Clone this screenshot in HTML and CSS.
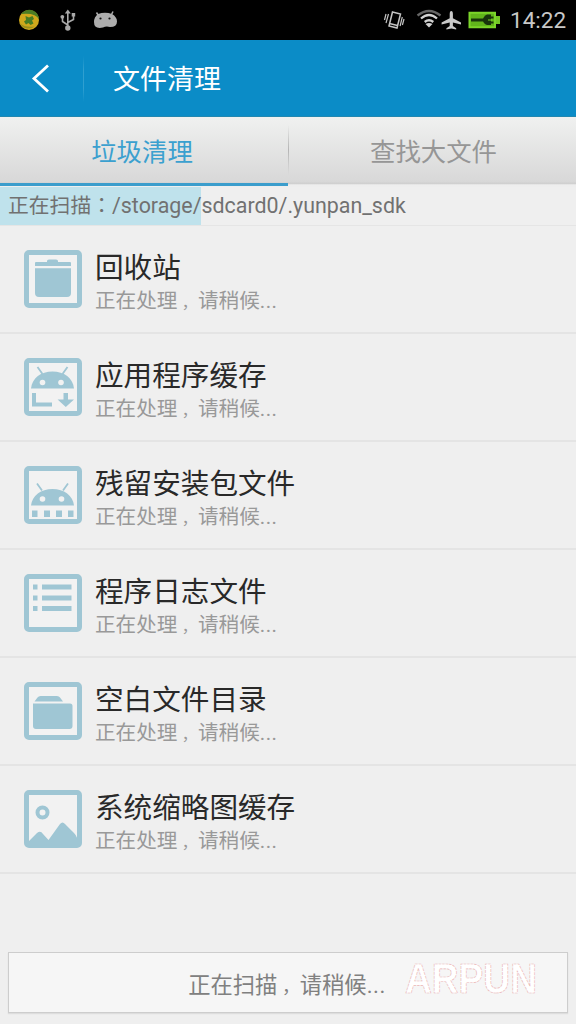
FILE: index.html
```html
<!DOCTYPE html>
<html lang="zh-CN">
<head>
<meta charset="utf-8">
<title>文件清理</title>
<link rel="stylesheet" href="styles.css">
</head>
<body>
<div class="screen">
  <div class="status">
    <svg class="status-icons" width="130" height="40" viewBox="0 0 130 40">
      <circle cx="29" cy="20" r="10" fill="#d0a81c"/>
      <path d="M21 14a10 10 0 0 1 12-3.500 10 10 0 0 1 6 9q-3-7-18-5.500z" fill="#4b7d24"/>
      <path d="M19.500 23q6 5 15 3.500a10 10 0 0 1-15-3.500z" fill="#9a8f1c"/>
      <path d="M25.500 16l3.500 1.500 3.500-1.500 1.500 3-2 1.500 1.500 3-3 1.500-2-2-2.500 1.500-2-3 2-1.500z" fill="#467d24"/>
      <g stroke="#a9a9a9" stroke-width="1.600" fill="none">
        <path d="M67.800 28V12M67.800 25L62.500 21.500V17M67.800 22.500L73.500 19.500V15"/>
      </g>
      <path d="M67.800 9.500l3 4h-6z" fill="#a9a9a9"/><circle cx="67.800" cy="28" r="2.700" fill="#a9a9a9"/><circle cx="62.300" cy="16.800" r="1.900" fill="#a9a9a9"/><path d="M71.700 13h3.500v3.500h-3.500z" fill="#a9a9a9"/>
      <path d="M98 14Q105 11.500 112 14Q117 17 117 21.500Q117 27 110 27Q106 26 103 27.500Q94 29.500 94 22Q94 17 98 14z" fill="#adadad"/>
      <path d="M96.500 12.500l2.500 4M113 11.500l-2 4" stroke="#adadad" stroke-width="1.500"/>
      <circle cx="100.500" cy="18.500" r="1.100" fill="#111"/><circle cx="109.500" cy="18.500" r="1.100" fill="#111"/>
    </svg>
    <svg class="status-icons" width="126" height="40" viewBox="380 0 126 40">
      <g fill="none" stroke="#c4c4c4" stroke-width="1.500">
        <path d="M392.500 12l8 2-3.500 14-8-2zM389.500 23.500l8 2"/>
        <path d="M388.500 14l-2.500 9M386 14l-1.500 6M402.300 17l-2.200 9M404 19l-1.600 6" stroke-width="1.200"/>
      </g>
      <g fill="none" stroke="#d2d2d2" stroke-width="2.300">
        <path d="M417.500 15.500Q429 6.500 440.500 15.500" stroke="#666"/>
        <path d="M421 18.500Q429 11.500 437 18.500"/>
        <path d="M424.700 22Q429 18.500 433.300 22"/>
      </g>
      <path d="M425.500 24q3.500-2 7 0l-3.500 3.500z" fill="#d2d2d2"/>
      <path d="M451.300 11q1.600 0 1.600 3v4.200l8.100 4.300v2l-8.100-2v3.500l3.300 2.200v1.300l-4.900-1-4.900 1v-1.300l3.300-2.200v-3.500l-8.100 2v-2l8.100-4.300V14q0-3 1.600-3z" fill="#c9c9c9"/>
      <path d="M469.500 12.800h25.500v14.400h-25.500z" fill="#61b51b" stroke="#7bd52a" stroke-width="2"/>
      <path d="M496 16h4v8h-4z" fill="#72c625"/>
      <path d="M471 18.500h13v3h-13z" fill="#18350c"/>
      <path d="M491 14.500v10.500h-4q-4-1.500-4-5t4-5.500z" fill="#18350c"/>
      <path d="M489 17.500h4.500M489 22.500h4.500" stroke="#18350c" stroke-width="2"/>
      <path d="M488 20h4" stroke="#7bd52a"/>
    </svg>
    <span class="clock">14:22</span>
  </div>
  <header class="titlebar">
    <svg class="back" width="84" height="77" viewBox="0 0 84 77"><path d="M48 25.500L34 38.500L48 51.500" fill="none" stroke="#fff" stroke-width="2.800"/></svg>
    <h1 class="title">文件清理</h1>
  </header>
  <nav class="tabs">
    <div class="tab tab-active">垃圾清理</div>
    <div class="tab">查找大文件</div>
  </nav>
  <div class="scan">正在扫描<span class="colon" lang="zh-TW">：</span><span class="path">/storage/sdcard0/.yunpan_sdk</span></div>
  <ul class="list">
    <li class="row">
      <svg class="icon" viewBox="0 0 58 58"><rect class="frame" x="2.500" y="2.500" width="53" height="53" rx="2.500"/><path d="M11 16v-3q0-1 1-1h11v-1q0-1.500 2-1.500h7q2 0 2 1.500v1h12q1 0 1 1v3zM11 18.300h36V43q0 4-4 4H15q-4 0-4-4z"/></svg>
      <div class="text"><div class="name">回收站</div><div class="state">正在处理<span class="comma">，</span>请稍候<span class="dots">...</span></div></div>
    </li>
    <li class="row">
      <svg class="icon" viewBox="0 0 58 58"><rect class="frame" x="2.500" y="2.500" width="53" height="53" rx="2.500"/><path d="M7 30.500C8 20 17 13.500 28.500 13.500S49 20 50 30.500z"/><path class="line" d="M13.500 9l5 7M43.500 9l-5 7"/><circle class="hole" cx="18.500" cy="24.500" r="2.800"/><circle class="hole" cx="37" cy="24.500" r="2.800"/><path d="M8 35h4v9.500h16v4H8zM39.500 35h4.500v6.500h6l-8.200 7.500-8.200-7.500h5.900z"/></svg>
      <div class="text"><div class="name">应用程序缓存</div><div class="state">正在处理<span class="comma">，</span>请稍候<span class="dots">...</span></div></div>
    </li>
    <li class="row">
      <svg class="icon" viewBox="0 0 58 58"><rect class="frame" x="2.500" y="2.500" width="53" height="53" rx="2.500"/><path d="M7 39.500C8 29.500 17 23 28.500 23S49 29.500 50 39.500z"/><path class="line" d="M13 17.500l5 7M44 17.500l-5 7"/><circle class="hole" cx="18.500" cy="33" r="2.800"/><circle class="hole" cx="37.500" cy="33" r="2.800"/><path d="M8 44.500h5.500V51H8zM20 44.500h6V51h-6zM32 44.500h6V51h-6zM44 44.500h5.500V51H44z"/></svg>
      <div class="text"><div class="name">残留安装包文件</div><div class="state">正在处理<span class="comma">，</span>请稍候<span class="dots">...</span></div></div>
    </li>
    <li class="row">
      <svg class="icon" viewBox="0 0 58 58"><rect class="frame" x="2.500" y="2.500" width="53" height="53" rx="2.500"/><path d="M9 10.500h4.500v5H9zM18 10.500h29.500v5H18zM9 21.500h4.500v5H9zM18 21.500h29.500v5H18zM9 32h4.500v5H9zM18 32h29.500v5H18z"/></svg>
      <div class="text"><div class="name">程序日志文件</div><div class="state">正在处理<span class="comma">，</span>请稍候<span class="dots">...</span></div></div>
    </li>
    <li class="row">
      <svg class="icon" viewBox="0 0 58 58"><rect class="frame" x="2.500" y="2.500" width="53" height="53" rx="2.500"/><path d="M10.500 19.500l3-4q1-1.500 3-1.500H33q2 0 3 1.500l3 4zM9 21.500h37q2.500 0 2.500 2.500v20q0 3-3 3H12q-3 0-3-3z"/></svg>
      <div class="text"><div class="name">空白文件目录</div><div class="state">正在处理<span class="comma">，</span>请稍候<span class="dots">...</span></div></div>
    </li>
    <li class="row">
      <svg class="icon" viewBox="0 0 58 58"><rect class="frame" x="2.500" y="2.500" width="53" height="53" rx="2.500"/><circle class="sun" cx="18.500" cy="22.500" r="5"/><path d="M4 54v-2l9-9q3.500-3 6 1l5.500 6L36 34q2.500-3 5 0l9 9q4 4 4 11z"/></svg>
      <div class="text"><div class="name">系统缩略图缓存</div><div class="state">正在处理<span class="comma">，</span>请稍候<span class="dots">...</span></div></div>
    </li>
  </ul>
  <footer class="footer">
    <div class="action"><span>正在扫描<span class="comma">，</span>请稍候<span class="dots">...</span></span>
      <svg class="mark" width="150" height="60" viewBox="0 0 150 60"><text x="6" y="41" textLength="132" lengthAdjust="spacingAndGlyphs">ARPUN</text></svg>
    </div>
  </footer>
</div>
</body>
</html>
```

FILE: styles.css
```css
* { box-sizing: border-box; }
body {
  margin: 0;
  font-family: Roboto, "Noto Sans CJK SC", sans-serif;
  background: #efefef;
}
.screen {
  width: 576px;
  height: 1024px;
  display: flex;
  flex-direction: column;
  overflow: hidden;
}
.colon { font-family: "Noto Sans CJK TC", sans-serif; }
.comma { font-size: .8em; line-height: 1; padding-left: .25em; }
.dots { letter-spacing: .5px; }
.status {
  height: 40px;
  background: #000;
  display: flex;
  align-items: center;
  justify-content: space-between;
}
.status-icons { flex: none; }
.status-icons + .status-icons { margin-left: auto; }
.clock {
  width: 70px;
  padding-left: 4px;
  font-size: 22.500px;
  line-height: 40px;
  color: #c8c8c8;
}
.titlebar {
  height: 77px;
  background: #0b8cc7;
  border-bottom: 1px solid #2288b0;
  display: flex;
  align-items: center;
}
.back {
  flex: none;
  background: linear-gradient(transparent, #2f9fd0 30%, #2f9fd0 70%, transparent) right 16px / 1px 46px no-repeat;
}
.title {
  margin: 0 0 0 29px;
  padding-top: 3px;
  font-size: 27px;
  line-height: 40px;
  font-weight: 400;
  color: #fff;
}
.tabs {
  height: 70px;
  display: flex;
  background: linear-gradient(#f0f1f0, #d8d8d8 92%, #d0d0d0 95%, #eee 97%);
}
.tab {
  flex: none;
  width: 288px;
  text-align: center;
  font-size: 25.400px;
  line-height: 70px;
  color: #969696;
}
.tab-active {
  color: #3ba0cf;
  height: 69px;
  padding-right: 4px;
  border-bottom: 3px solid #3b9dcc;
}
.tab + .tab {
  background: linear-gradient(transparent, #b5b5b5 50%, transparent) 0 8px / 1px 50px no-repeat;
  padding-left: 3px;
}
.scan {
  height: 39px;
  padding-left: 8px;
  font-size: 20.800px;
  line-height: 34px;
  color: #717171;
  white-space: nowrap;
  background: linear-gradient(#bfe2ec, #bfe2ec) 0 0 / 201px 38px no-repeat;
  border-bottom: 1px solid #e5e5e5;
}
.path { font-size: 21.400px; }
.list {
  list-style: none;
  margin: 0;
  padding: 0;
}
.row {
  height: 108px;
  padding: 24px 24px 0;
  display: flex;
  gap: 13px;
  border-bottom: 2px solid #e4e4e4;
}
.icon {
  flex: none;
  width: 58px;
  height: 58px;
  fill: #9fc6d4;
}
.frame { fill: #f2f2f2; stroke: #9fc6d4; stroke-width: 5; }
.line { stroke: #9fc6d4; stroke-width: 1.800; }
.hole { fill: #f2f2f2; }
.sun { fill: none; stroke: #9fc6d4; stroke-width: 4; }
.name {
  font-size: 28.600px;
  line-height: 36px;
  color: #292929;
  font-weight: 400;
}
.state {
  font-size: 20.600px;
  line-height: 30px;
  color: #999;
}
.footer { padding: 26px 8px 0; margin-top: auto; height: 98px; }
.action {
  position: relative;
  height: 61px;
  border: 1px solid #cdcdcd;
  background: #f6f6f6;
  padding-right: 2px;
  text-align: center;
  font-size: 22.300px;
  line-height: 65px;
  color: #808080;
  box-shadow: 0 1px 1px #ddd;
}
.mark {
  position: absolute;
  left: 390px;
  top: -1px;
  overflow: visible;
}
.mark text {
  font: 700 43px "Liberation Sans", sans-serif;
  fill: #fff;
  stroke: #eab5b5;
  stroke-width: .7;
  stroke-dasharray: 3 1;
}
```
